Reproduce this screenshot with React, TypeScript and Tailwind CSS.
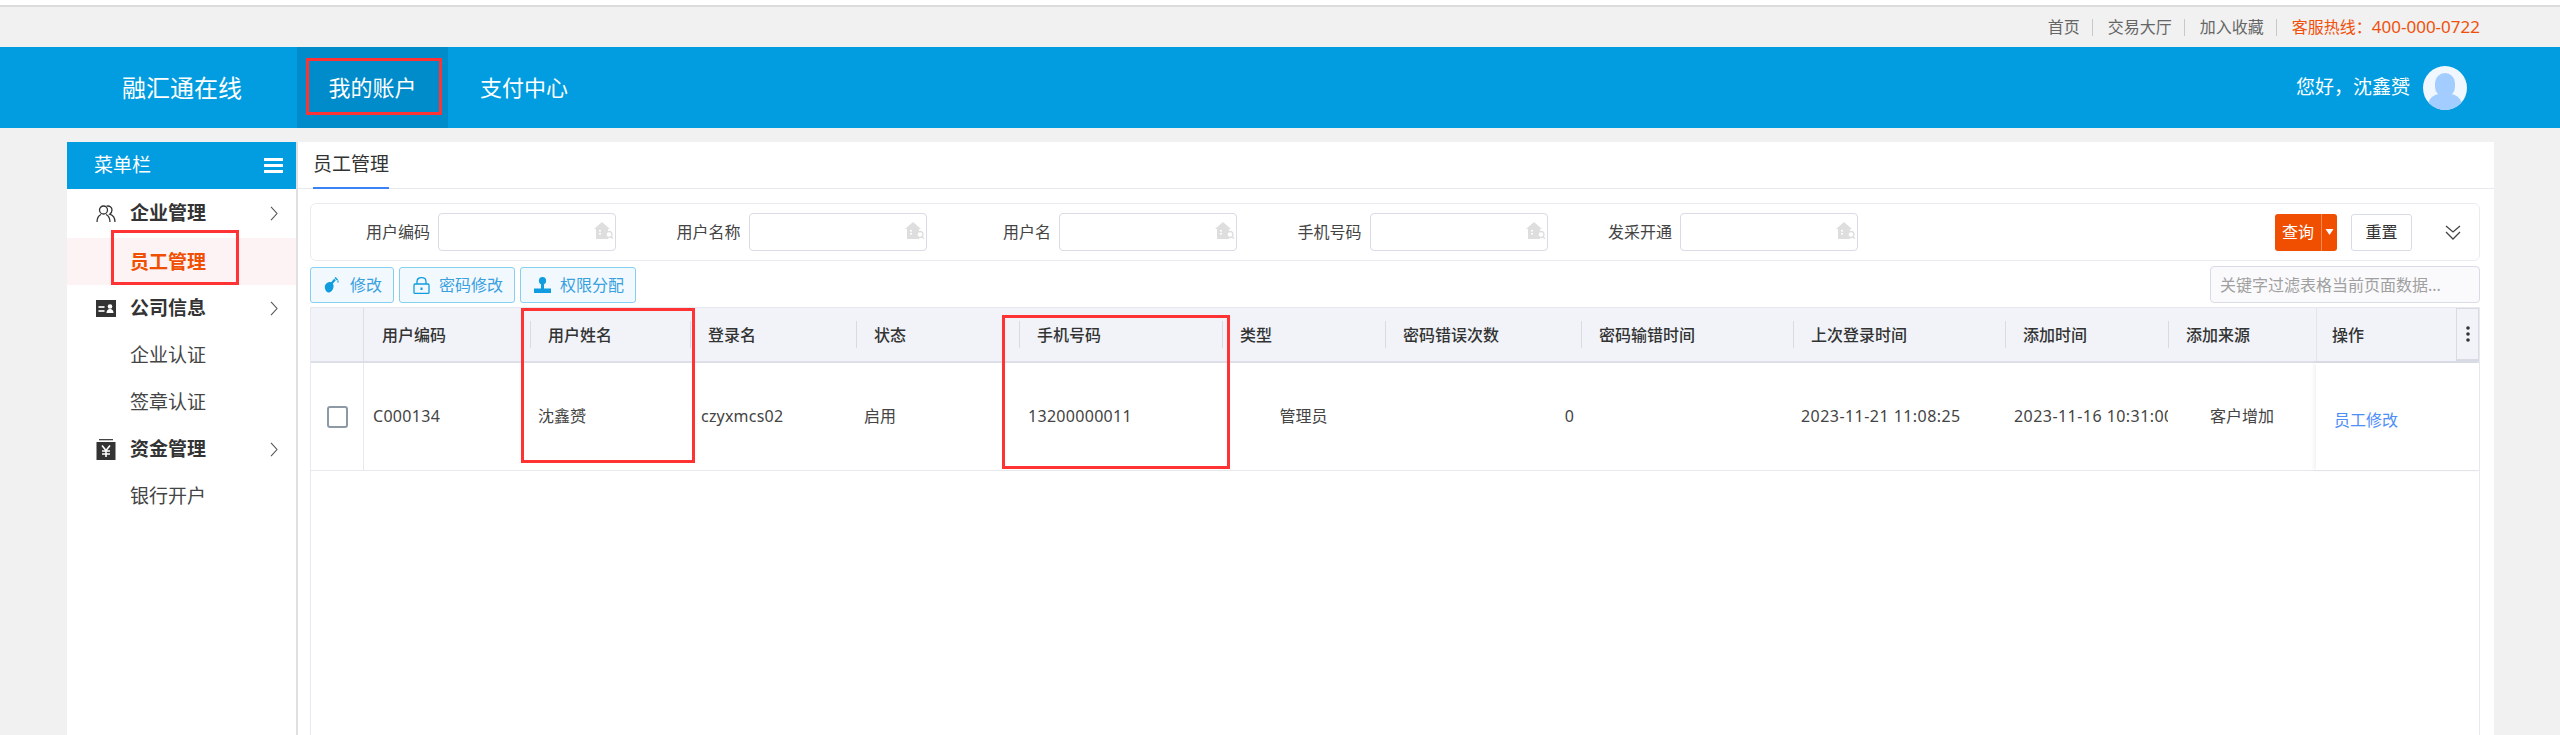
const FILTERS = ['用户编码', '用户名称', '用户名', '手机号码', '发采开通']

const COLUMNS = [
  { title: '用户编码', width: 'w-[166px]', first: true },
  { title: '用户姓名', width: 'w-[160px]' },
  { title: '登录名', width: 'w-[166px]' },
  { title: '状态', width: 'w-[163px]' },
  { title: '手机号码', width: 'w-[203px]' },
  { title: '类型', width: 'w-[163px]' },
  { title: '密码错误次数', width: 'w-[196px]' },
  { title: '密码输错时间', width: 'w-[212px]' },
  { title: '上次登录时间', width: 'w-[212px]' },
  { title: '添加时间', width: 'w-[163px]' },
  { title: '添加来源', width: 'w-[148px]' },
]

function PeopleIcon() {
  return (
    <svg width="20" height="18" viewBox="0 0 20 18" fill="none" stroke="#333" strokeWidth="1.300">
      <circle cx="7.500" cy="5" r="4" />
      <path d="M1 17c0-3.500 2-6.500 4-7.500M14 17c0-3.500-2-6.500-4-7.500" />
      <path d="M10.500 1.200c3-.8 5.500 1 5.500 3.800 0 1.800-1 3.300-2.300 4.200 3 1 5.300 4 5.300 7.800" />
    </svg>
  )
}

function CardIcon() {
  return (
    <svg width="20" height="17" viewBox="0 0 20 17">
      <rect width="20" height="17" fill="#333" />
      <rect x="2.500" y="6" width="6" height="2" fill="#ddd" />
      <rect x="2.500" y="10" width="6" height="2" fill="#ddd" />
      <circle cx="14" cy="6.500" r="2.300" fill="#fff" />
      <path d="M10.500 13c0-2.500 1.500-4 3.500-4s3.500 1.500 3.500 4z" fill="#fff" />
    </svg>
  )
}

function MoneyIcon() {
  return (
    <svg width="20" height="21" viewBox="0 0 20 21">
      <rect x="3" y="0" width="14" height="1.300" fill="#444" />
      <rect x="0.500" y="3" width="19" height="18" fill="#333" />
      <path d="M6 6.500 10 11.500l4-5M6 12h8M6 15h8M10 11.500v6.500" stroke="#fff" strokeWidth="1.600" fill="none" />
    </svg>
  )
}

function InputIcon() {
  return (
    <svg width="20" height="17" viewBox="0 0 20 17" className="absolute right-[1px] top-[8px]">
      <path d="M8 0 0 7h2v10h12V7h2z" fill="#dedede" />
      <path d="M5 8h2v1.500H5zM5 11h2v1.500H5z" fill="#fff" />
      <circle cx="15" cy="12.500" r="3" fill="#fff" stroke="#dedede" strokeWidth="1.300" />
      <path d="m17 14.800 2 2" stroke="#dedede" strokeWidth="1.300" />
    </svg>
  )
}

function SprayIcon() {
  return (
    <svg width="16" height="16" viewBox="0 0 16 16">
      <path d="M1 8.500C2 6 4.500 4.500 6.500 5c2 .5 3.500 2.500 3 5-.5 3-2.500 5.500-5 5.500S.2 11 1 8.500z" fill="#0f9de0" />
      <path d="m7.500 6.500 3.500-4" stroke="#0f9de0" strokeWidth="2.200" />
      <path d="m11 .5 2.500 2.500" stroke="#0f9de0" strokeWidth="1.500" />
      <rect x="13" y="3.500" width="2" height="2" fill="#0f9de0" opacity="0.6" />
    </svg>
  )
}

function LockIcon() {
  return (
    <svg width="17" height="17" viewBox="0 0 17 17" fill="none" stroke="#0f9de0" strokeWidth="1.300">
      <rect x="1" y="7" width="15" height="9.400" rx="1" />
      <path d="M4 7V4.500C4 2 6 .7 8.500.7S13 2 13 4.500V7" />
      <path d="M8.500 10.500v2.500" strokeWidth="2" />
    </svg>
  )
}

function StampIcon() {
  return (
    <svg width="19" height="16" viewBox="0 0 19 16">
      <ellipse cx="9.500" cy="3.800" rx="3.600" ry="3.800" fill="#0f9de0" />
      <rect x="8" y="6" width="3" height="6" fill="#0f9de0" />
      <rect x="1" y="11.500" width="17" height="4.500" fill="#0f9de0" />
    </svg>
  )
}

function SideChevron() {
  return (
    <svg width="8" height="15" viewBox="0 0 8 15" fill="none" stroke="#555" strokeWidth="1.100" className="ml-auto">
      <path d="m1 .8 6 6.700-6 6.700" />
    </svg>
  )
}

function Toolbtn({ label, icon, className }: { label: string; icon: React.ReactNode; className: string }) {
  return (
    <button className={`flex h-[36px] items-center rounded-[3px] border border-[#86cff1] bg-[#f1f9fe] text-[16px] text-[#3aa0de] ${className}`}>
      {icon}
      <span>{label}</span>
    </button>
  )
}

function MenuGroup({ label, icon }: { label: string; icon: React.ReactNode }) {
  return (
    <div className="flex h-[47px] items-center pl-[29px] pr-[18px]">
      <span className="flex w-[34px] items-center">{icon}</span>
      <span className="text-[19px] font-bold text-[#333]">{label}</span>
      <SideChevron />
    </div>
  )
}

function MenuItem({ label }: { label: string }) {
  return (
    <div className="flex h-[47px] items-center pl-[63px] text-[19px] text-[#444]">{label}</div>
  )
}

function RedBox({ className }: { className: string }) {
  return <div className={`pointer-events-none absolute border-[3px] border-[#ff3333] ${className}`} />
}

export default function App() {
  return (
    <div className="flex h-[735px] w-full flex-col overflow-hidden bg-[#f1f1f1] font-['Noto_Sans','Noto_Sans_CJK_SC',sans-serif] text-[#333]">
      <div className="h-[5px] bg-white" />
      <div className="h-[2px] bg-[#dcdcdc]" />

      <div className="flex h-[40px] items-center justify-end pr-[80px] text-[16px] text-[#666]">
        <span>首页</span>
        <span className="ml-[12px] mr-[15px] h-[17px] w-px bg-[#c8c8c8]" />
        <span>交易大厅</span>
        <span className="ml-[12px] mr-[15px] h-[17px] w-px bg-[#c8c8c8]" />
        <span>加入收藏</span>
        <span className="ml-[12px] mr-[15px] h-[17px] w-px bg-[#c8c8c8]" />
        <span className="text-[#f0500a]">客服热线：<span className="text-[17px]">400-000-0722</span></span>
      </div>

      <div className="flex h-[81px] items-center bg-[#019de0] text-white">
        <div className="w-[297px] pl-[122px] text-[24px]">融汇通在线</div>
        <div className="relative flex h-full w-[151px] items-center justify-center bg-[#008bca] text-[22px]">
          我的账户
          <RedBox className="left-[9px] top-[11px] h-[57px] w-[136px]" />
        </div>
        <div className="ml-[32px] text-[22px]">支付中心</div>
        <div className="ml-auto text-[19px]">您好，沈鑫赟</div>
        <div className="relative ml-[13px] mr-[93px] h-[44px] w-[44px] overflow-hidden rounded-full bg-[#f0f7ff]">
          <div className="absolute left-[12px] top-[7px] h-[24px] w-[20px] rounded-full bg-[#a3cdff]" />
          <div className="absolute left-[5px] top-[28px] h-[24px] w-[34px] rounded-full bg-[#a3cdff]" />
        </div>
      </div>

      <div className="flex min-h-0 flex-1 pl-[67px] pr-[66px] pt-[14px]">
        <div className="w-[231px] shrink-0 border-r-2 border-[#e0e0e0] bg-white">
          <div className="flex h-[47px] items-center justify-between bg-[#019de0] pl-[27px] pr-[13px] text-[19px] text-white">
            <span>菜单栏</span>
            <svg width="19" height="15" viewBox="0 0 19 15" fill="#fff">
              <rect width="19" height="3" />
              <rect y="6" width="19" height="3" />
              <rect y="12" width="19" height="3" />
            </svg>
          </div>
          <div className="py-[1px]">
            <MenuGroup label="企业管理" icon={<PeopleIcon />} />
          </div>
          <div className="relative flex h-[47px] items-center bg-[#fdf3f4] pl-[63px] pt-[1px] text-[19px] font-bold text-[#f04e00]">
            员工管理
            <RedBox className="left-[44px] top-[-8px] h-[55px] w-[128px]" />
          </div>
          <MenuGroup label="公司信息" icon={<CardIcon />} />
          <MenuItem label="企业认证" />
          <MenuItem label="签章认证" />
          <MenuGroup label="资金管理" icon={<MoneyIcon />} />
          <MenuItem label="银行开户" />
        </div>

        <div className="flex min-w-0 flex-1 flex-col bg-white pl-[12px] pr-[14px]">
          <div className="-ml-[12px] -mr-[14px] h-[47px] border-b border-[#e8e9ef] pl-[15px]">
            <div className="flex h-[47px] w-fit items-center border-b-2 border-[#3b82f6] text-[19px] text-[#333]">员工管理</div>
          </div>

          <div className="mt-[14px] flex h-[58px] shrink-0 items-center rounded-[6px] border-[1.500px] border-[#ebecf0] pr-[18px]">
            {FILTERS.map((label) => (
              <div key={label} className="flex w-[310.500px] items-center text-[16px] text-[#444]">
                <span className="w-[119px] text-right">{label}</span>
                <div className="relative ml-[8px] h-[38px] w-[178px] rounded-[4px] border border-[#d9dce6] bg-white">
                  <InputIcon />
                </div>
              </div>
            ))}
            <div className="ml-auto flex h-[37px] w-[62px] items-center rounded-[3px] bg-[#f04e00] text-[16px] text-white">
              <span className="w-[46px] text-center">查询</span>
              <span className="h-full w-px bg-[#f78a55]" />
              <svg width="15" height="6" viewBox="0 0 10 6" fill="#fff"><path d="M1 0h8L5 6z" /></svg>
            </div>
            <button className="ml-[14px] h-[37px] w-[61px] rounded-[3px] border border-[#d9dce6] bg-white text-[16px] text-[#333]">重置</button>
            <svg width="16" height="15" viewBox="0 0 16 15" fill="none" stroke="#444" strokeWidth="1.300" className="ml-[33px]">
              <path d="m1 1 7 6 7-6M1 7l7 7 7-7" />
            </svg>
          </div>

          <div className="flex h-[42px] shrink-0 items-end justify-between">
            <div className="flex gap-[5px]">
              <Toolbtn label="修改" icon={<SprayIcon />} className="w-[84px] gap-[10px] pl-[13px]" />
              <Toolbtn label="密码修改" icon={<LockIcon />} className="w-[116px] gap-[9px] pl-[13px]" />
              <Toolbtn label="权限分配" icon={<StampIcon />} className="w-[116px] gap-[8px] pl-[12px]" />
            </div>
            <div className="flex h-[37px] w-[270px] items-center rounded-[4px] border border-[#d9dce6] bg-[#fafafc] pl-[9px] text-[16px] text-[#a0a0a0]">
              关键字过滤表格当前页面数据...
            </div>
          </div>

          <div className="relative mt-[4px] flex-1 border-x border-t border-[#e8e9ef] text-[16px]">
            <div className="flex h-[55px] border-b-2 border-[#dcdfe8] bg-[#f1f3f9]">
              <div className="w-[53px] shrink-0 border-r border-[#dcdfe8]" />
              {COLUMNS.map((col) => (
                <div key={col.title} className={`flex shrink-0 items-center font-medium ${col.width}`}>
                  <span className={col.first ? 'h-[27px] w-px' : 'h-[27px] w-px bg-[#d8dbe3]'} />
                  <span className="ml-[17px] whitespace-nowrap">{col.title}</span>
                </div>
              ))}
              <div className="flex w-[163px] shrink-0 items-center justify-between border-l border-[#e4e6ec] bg-[#f1f3f9] pl-[15px] font-medium">
                <span>操作</span>
                <div className="flex h-full w-[23px] items-center justify-center border border-b-2 border-[#d8dbe3]">
                  <svg width="4" height="16" viewBox="0 0 4 16" fill="#333">
                    <circle cx="2" cy="2" r="1.800" />
                    <circle cx="2" cy="8" r="1.800" />
                    <circle cx="2" cy="14" r="1.800" />
                  </svg>
                </div>
              </div>
            </div>

            <div className="flex h-[108px] items-center border-b border-[#e8e9ef] text-[#444]">
              <div className="flex h-full w-[53px] shrink-0 items-center justify-end border-r border-[#e8e9ef] pr-[15px]">
                <span className="h-[22px] w-[21px] rounded-[3px] border-2 border-[#8e99a6] bg-white" />
              </div>
              <div className="mb-[2px] w-[166px] shrink-0 pl-[9px] tracking-[0.3px]">C000134</div>
              <div className="mb-[2px] w-[160px] shrink-0 pl-[8px]">沈鑫赟</div>
              <div className="mb-[2px] w-[166px] shrink-0 pl-[11px] tracking-[0.2px]">czyxmcs02</div>
              <div className="mb-[2px] w-[163px] shrink-0 pl-[8px]">启用</div>
              <div className="mb-[2px] w-[203px] shrink-0 pl-[9px] tracking-[0.3px]">13200000011</div>
              <div className="mb-[2px] w-[163px] shrink-0 text-center">管理员</div>
              <div className="mb-[2px] w-[196px] shrink-0 pr-[7px] text-right">0</div>
              <div className="w-[212px] shrink-0" />
              <div className="mb-[2px] w-[212px] shrink-0 pl-[8px] tracking-[0.45px]">2023-11-21 11:08:25</div>
              <div className="mb-[2px] w-[163px] shrink-0 overflow-hidden whitespace-nowrap pl-[9px] tracking-[0.45px]">2023-11-16 10:31:00</div>
              <div className="mb-[2px] w-[148px] shrink-0 text-center">客户增加</div>
              <div className="flex h-full w-[163px] shrink-0 items-center bg-white pl-[18px] pt-[6px] text-[#4d8ef7] shadow-[-2px_0_4px_rgba(0,0,0,0.06)]">员工修改</div>
            </div>

            <RedBox className="left-[210px] top-[0px] h-[155px] w-[174px]" />
            <RedBox className="left-[691px] top-[7px] h-[154px] w-[228px]" />
          </div>
        </div>
      </div>
    </div>
  )
}
